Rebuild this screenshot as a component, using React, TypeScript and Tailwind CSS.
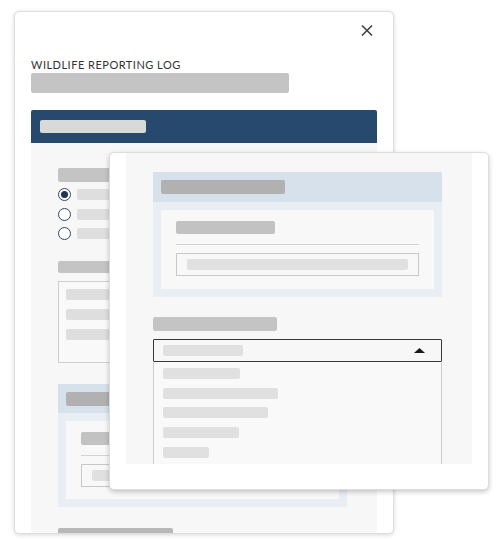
import React from 'react';

const Bar = ({ className }: { className: string }) => <div className={`rounded-[2px] shrink-0 ${className}`} />;

function Radio({ checked }: { checked?: boolean }) {
  return (
    <div className="w-[13px] h-[13px] rounded-full border-[1.5px] border-[#2b4a6c] bg-white flex items-center justify-center shrink-0">
      {checked && <div className="w-[7px] h-[7px] rounded-full bg-[#1d3656]" />}
    </div>
  );
}

function BlueSection({ headerH, boxH }: { headerH: string; boxH: string }) {
  return (
    <div className="w-[289px] shrink-0">
      <div className={`bg-[#d7e1eb] pl-[8px] pt-[8px] ${headerH}`}>
        <Bar className="w-[124px] h-[14px] bg-[#b1b1b1]" />
      </div>
      <div className="bg-[#e8eef4] px-[8px] py-[8px]">
        <div className={`bg-[#f8f8f8] px-[15px] pt-[11px] ${boxH}`}>
          <Bar className="w-[99px] h-[13px] bg-[#c2c2c2]" />
          <div className="mt-[10px] h-px bg-[#d2d2d2]" />
          <div className="mt-[8px] h-[23px] border border-[#c8c8c8] px-[10px] pt-[5px]">
            <Bar className="h-[11px] bg-[#e0e0e0]" />
          </div>
        </div>
      </div>
    </div>
  );
}

function BackCard() {
  return (
    <div className="absolute left-[14px] top-[11px] w-[380px] h-[523px] rounded-[5px] border border-[#dddddd] bg-white shadow-[0_1px_4px_rgba(0,0,0,0.16)] overflow-hidden flex flex-col px-[16px]">
      <div className="flex justify-end pt-[13px] pr-[4px]">
        <svg width="12" height="11" viewBox="0 0 12 11" fill="none">
          <path d="M1 0.5L11 10.5M11 0.5L1 10.5" stroke="#444" strokeWidth="1.6" />
        </svg>
      </div>
      <div className="mt-[22px] text-[11px] leading-[14px] tracking-[0.045em] text-[#333] font-['Lato','Liberation_Sans',sans-serif]">
        WILDLIFE REPORTING LOG
      </div>
      <Bar className="mt-[1px] w-[258px] h-[20px] bg-[#c4c4c4]" />
      <div className="mt-[17px] h-[33px] bg-[#27496d] rounded-t-[2px] pl-[9px] pt-[10px] shrink-0">
        <Bar className="w-[106px] h-[13px] bg-[#d9d9d9]" />
      </div>
      <div className="flex-1 min-h-0 bg-[#f7f7f7] pl-[27px] pt-[25px] overflow-hidden">
        <Bar className="w-[120px] h-[14px] bg-[#c4c4c4]" />
        <div className="mt-[6px] flex flex-col gap-[6.5px]">
          {[true, false, false].map((c, i) => (
            <div key={i} className="flex items-center gap-[6px]">
              <Radio checked={c} />
              <Bar className="w-[110px] h-[11px] bg-[#dedede]" />
            </div>
          ))}
        </div>
        <Bar className="mt-[21px] w-[130px] h-[12px] bg-[#c4c4c4]" />
        <div className="mt-[8px] w-[289px] h-[82px] border border-[#cfcfcf] bg-[#f9f9f9] pl-[7px] pt-[7px] flex flex-col gap-[9px]">
          <Bar className="w-[120px] h-[11px] bg-[#dedede]" />
          <Bar className="w-[140px] h-[11px] bg-[#dedede]" />
          <Bar className="w-[110px] h-[11px] bg-[#dedede]" />
        </div>
        <div className="mt-[21px]">
          <BlueSection headerH="h-[29px]" boxH="h-[78px]" />
        </div>
        <Bar className="mt-[21px] w-[115px] h-[14px] bg-[#b8b8b8]" />
      </div>
    </div>
  );
}

function FrontCard() {
  const items = ['w-[77px]', 'w-[115px]', 'w-[105px]', 'w-[76px]', 'w-[46px]'];
  return (
    <div className="absolute left-[109px] top-[152px] w-[380px] h-[338px] rounded-[5px] border border-[#dddddd] bg-white shadow-[0_2px_5px_rgba(0,0,0,0.22)] flex flex-col px-[16px]">
      <div className="h-[311px] bg-[#f7f7f7] pl-[27px] pr-[30px] pt-[19px] flex flex-col overflow-hidden">
        <BlueSection headerH="h-[30px]" boxH="h-[79px]" />
        <Bar className="mt-[20px] w-[124px] h-[14px] bg-[#c4c4c4]" />
        <div className="mt-[8px] h-[23px] border-[1.5px] border-[#383838] rounded-[1px] flex items-center justify-between pl-[8.5px] pr-[16.5px] shrink-0">
          <Bar className="w-[80px] h-[11px] bg-[#e0e0e0]" />
          <svg width="11" height="5" viewBox="0 0 11 5">
            <path d="M0 5L5.5 0L11 5Z" fill="#1a1a1a" />
          </svg>
        </div>
        <div className="flex-1 border-x border-[#cccccc] bg-[#f9f9f9] pl-[9px] pt-[6px] flex flex-col gap-[8.7px]">
          {items.map((w, i) => (
            <Bar key={i} className={`${w} h-[11px] bg-[#e0e0e0]`} />
          ))}
        </div>
      </div>
    </div>
  );
}

export default function App() {
  return (
    <div className="relative w-[504px] h-[550px] bg-white overflow-hidden">
      <BackCard />
      <FrontCard />
    </div>
  );
}
